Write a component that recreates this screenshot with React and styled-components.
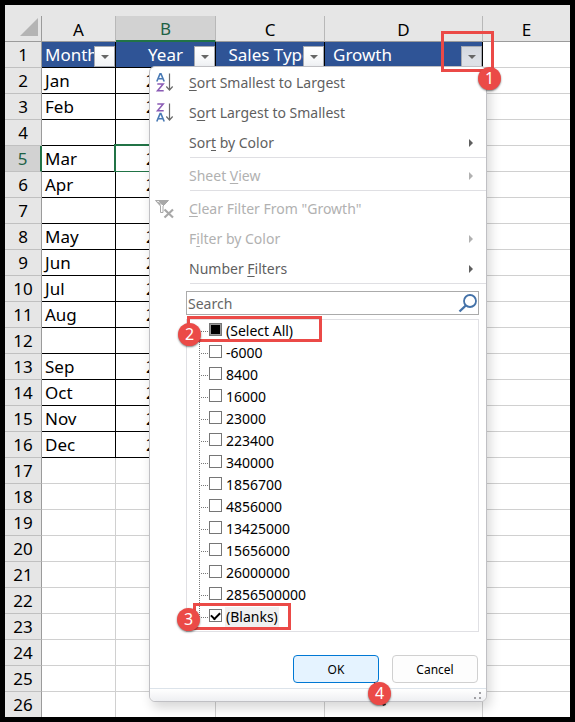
import React, { Fragment, useState, useEffect, useRef } from "react";
import styled, { createGlobalStyle } from "styled-components";

const GlobalStyle = createGlobalStyle`
  * {
    box-sizing: border-box;
  }
  body {
    margin: 0;
    background: #000;
    font-family: "Noto Sans", "Open Sans", sans-serif;
  }
`;

const Frame = styled.main`
  padding: 5px;
  background: #000;
`;

const Sheet = styled.div`
  position: relative;
  padding-top: 11px;
  background: #e6e6e6;
`;

const Grid = styled.table`
  width: 100%;
  table-layout: fixed;
  border-collapse: separate;
  border-spacing: 0;
  font-size: 17px;
  line-height: 24px;
  color: #000;
`;

const Col = styled.col`
  width: ${(props) => props.size};
`;

const Corner = styled.td`
  height: 26px;
  padding: 0 3px 3px 0;
  border-right: 1px solid #9b9b9b;
  border-bottom: 1px solid #9b9b9b;
`;

const CornerMark = styled.div`
  width: 0;
  height: 0;
  margin-left: auto;
  border-left: 18px solid transparent;
  border-bottom: 18px solid #b4b4b4;
`;

const ColumnHead = styled.th`
  height: 26px;
  padding: ${(props) => (props.$active ? "1px 0 0" : "2px 0 0")};
  line-height: 23px;
  font-weight: 400;
  color: ${(props) => (props.$active ? "#1e6145" : "#000")};
  background: ${(props) => (props.$active ? "#d2d2d2" : "#e6e6e6")};
  border-right: ${(props) => (props.$last ? "0" : "1px solid #b8b8b8")};
  border-bottom: ${(props) =>
    props.$active ? "2px solid #217346" : "1px solid #9b9b9b"};
`;

const RowHead = styled.th`
  height: 26px;
  padding: 0;
  font-weight: 400;
  color: ${(props) => (props.$active ? "#1e6145" : "#000")};
  background: ${(props) => (props.$active ? "#d2d2d2" : "#e6e6e6")};
  border-right: ${(props) =>
    props.$active ? "2px solid #217346" : "1px solid #9b9b9b"};
  border-bottom: 1px solid #c0c0c0;
  tr:last-child > & {
    height: 25px;
    border-bottom: 0;
  }
`;

const Cell = styled.td`
  position: relative;
  height: 26px;
  padding: 0 3px;
  background: #fff;
  text-align: ${(props) => props.$align || "left"};
  border-right: ${(props) => (props.$last ? "0" : "1px solid")};
  border-bottom: 1px solid;
  border-color: ${(props) => (props.$filled ? "#000" : "#d0d0d0")};
  tr:last-child > & {
    height: 25px;
    border-bottom: 0;
  }
  &::after {
    content: "";
    display: ${(props) => (props.$selected ? "block" : "none")};
    position: absolute;
    inset: -2px;
    border: 2px solid #217346;
  }
`;

const TitleCell = styled(Cell)`
  padding: 0 ${(props) => (props.$indent ? "8px" : "3px")};
  color: #fff;
  background: #2f5496;
  white-space: nowrap;
`;

const FilterButton = styled.button`
  position: absolute;
  right: 0;
  bottom: 0;
  display: flex;
  align-items: center;
  justify-content: center;
  width: 21px;
  height: 21px;
  padding: 0;
  border: 1px solid #a6aab2;
  background: ${(props) =>
    props.$open
      ? "linear-gradient(#d4d8df, #e2e5ea)"
      : "linear-gradient(#fff, #f1f3f6)"};
`;

const DownArrow = styled.span`
  border: 4px solid transparent;
  border-top-color: #666;
  border-bottom: 0;
`;

const Menu = styled.form`
  position: absolute;
  top: 61px;
  left: 144px;
  width: 338px;
  border: 1px solid #c0c0c4;
  border-radius: 6px;
  background: #fff;
  box-shadow: 3px 6px 12px rgba(0, 0, 0, 0.16);
  font-size: 14px;
`;

const Item = styled.button`
  display: flex;
  align-items: center;
  width: 100%;
  height: 30px;
  padding: 2px 13px 0 4px;
  border: 0;
  background: none;
  font-family: inherit;
  font-size: 14px;
  line-height: 20px;
  text-align: left;
  color: ${(props) => (props.disabled ? "#b1b1b1" : "#5f5f5f")};
`;

const ItemIcon = styled.span`
  display: flex;
  width: 35px;
`;

const ItemLabel = styled.span`
  flex: 1;
  white-space: nowrap;
  u {
    text-underline-offset: 2px;
  }
`;

const SubArrow = styled.span`
  border: 4px solid transparent;
  border-left-color: currentColor;
  border-right: 0;
`;

const Separator = styled.hr`
  height: 1px;
  margin: 0 0 2px 40px;
  border: 0;
  background: #dfdfe3;
`;

const Picker = styled.div`
  padding: 5px 7px 0 36px;
`;

const SearchBox = styled.label`
  display: flex;
  align-items: center;
  height: 24px;
  border: 1px solid #ababab;
`;

const SearchInput = styled.input`
  flex: 1;
  min-width: 0;
  padding: 0 1px;
  border: 0;
  outline: 0;
  background: none;
  font-family: inherit;
  font-size: 14px;
  color: #5f5f5f;
  &::placeholder {
    color: #666;
    opacity: 1;
  }
`;

const Tree = styled.ul`
  margin: 4px 0 0;
  padding: 0 0 3px 12px;
  border: 1px solid #e0e0e4;
  list-style: none;
`;

const Branch = styled.li`
  position: relative;
  display: flex;
  align-items: center;
  height: 22px;
  &::before {
    content: "";
    align-self: ${(props) => (props.$first ? "flex-end" : "flex-start")};
    width: 1px;
    height: ${(props) => (props.$first || props.$last ? "11px" : "22px")};
    background: repeating-linear-gradient(#777 0 1px, transparent 1px 2px);
  }
`;

const Twig = styled.span`
  width: 8px;
  height: 1px;
  margin-right: 1px;
  background: repeating-linear-gradient(
    90deg,
    transparent 0 1px,
    #777 1px 2px
  );
`;

const Option = styled.label`
  display: flex;
  align-items: center;
  line-height: 20px;
  color: #000;
`;

const Check = styled.input`
  appearance: none;
  display: flex;
  align-items: center;
  justify-content: center;
  width: 13px;
  height: 13px;
  margin: 0 3px 3px 0;
  border: 1px solid #767676;
  background: #fff;
  &:indeterminate::after {
    content: "";
    width: 9px;
    height: 9px;
    border: 1px solid #999;
    background: #000;
  }
  &:checked::after {
    content: "";
    width: 7px;
    height: 4px;
    margin-bottom: 2px;
    border-left: 2px solid #000;
    border-bottom: 2px solid #000;
    transform: rotate(-45deg);
  }
`;

const OptionText = styled.span`
  padding: 0 1px;
  background: ${(props) => (props.$current ? "#f0f0f0" : "none")};
`;

const Actions = styled.div`
  display: flex;
  justify-content: flex-end;
  gap: 13px;
  padding: 23px 1px 5px;
`;

const ActionButton = styled.button`
  width: 86px;
  height: 28px;
  padding: 0;
  border: 1px solid ${(props) => (props.$primary ? "#0078d4" : "#d0d0d0")};
  border-radius: 4px;
  background: ${(props) => (props.$primary ? "#e5f3ff" : "#fdfdfd")};
  font-family: inherit;
  font-size: 12px;
  color: #000;
`;

const Anchor = styled.span`
  position: relative;
  display: flex;
`;

const MenuFoot = styled.div`
  display: flex;
  justify-content: flex-end;
  height: 13px;
  padding: 3px 4px 0;
  border-top: 1px solid #dce3ea;
  border-radius: 0 0 6px 6px;
  background: linear-gradient(#fff, #eeeff2);
`;

const Highlight = styled.span`
  position: absolute;
  z-index: 1;
  top: ${(props) => props.$top};
  left: ${(props) => props.$left};
  width: ${(props) => props.$width};
  height: ${(props) => props.$height};
  border: 3px solid #eb4a47;
  pointer-events: none;
`;

const Step = styled.span`
  position: absolute;
  z-index: 2;
  top: ${(props) => props.$top};
  left: ${(props) => props.$left};
  width: 23px;
  height: 23px;
  border-radius: 50%;
  background: #eb4a47;
  box-shadow: 0 1px 2px rgba(0, 0, 0, 0.5);
  font-size: 16px;
  line-height: 23px;
  text-align: center;
  color: #fff;
  pointer-events: none;
`;

const Pointer = styled.svg`
  position: absolute;
  z-index: 1;
  top: 27px;
  left: 81px;
`;

const months = {
  2: "Jan",
  3: "Feb",
  5: "Mar",
  6: "Apr",
  8: "May",
  9: "Jun",
  10: "Jul",
  11: "Aug",
  13: "Sep",
  14: "Oct",
  15: "Nov",
  16: "Dec",
};

const rows = Array.from({ length: 25 }, (_, i) => i + 2);

const values = [
  "-6000",
  "8400",
  "16000",
  "23000",
  "223400",
  "340000",
  "1856700",
  "4856000",
  "13425000",
  "15656000",
  "26000000",
  "2856500000",
  "(Blanks)",
];

const SortIcon = ({ descending }) => (
  <svg width="22" height="20" viewBox="0 0 22 20" fill="none">
    <g transform={descending ? "translate(0 10)" : undefined}>
      <path d="M2.8 8.500 6.100.6h.8L10.200 8.500M4 5.800h5" stroke="#4a7ab5" strokeWidth="1.600" />
    </g>
    <g transform={descending ? "translate(0 -10)" : undefined}>
      <path d="M3.300 11h5.900L3.500 17.700h6.200" stroke="#8a5bb5" strokeWidth="1.500" />
    </g>
    <path d="M15.500.5v16.500M12.300 13.500l3.200 3.500 3.200-3.500" stroke="#6a6a6a" strokeWidth="1.200" />
  </svg>
);

const ClearFilterIcon = () => (
  <svg width="22" height="20" viewBox="0 0 22 20" fill="none">
    <path d="M1.500 1.500h13L9 7v6.500H6.500V7z" stroke="#a8a8a8" />
    <path d="M1.500 1.500h13L10.500 6H8L4 1.500z" fill="#a8a8a8" />
    <path d="M2 2l4.500 5V4z" fill="#a8a8a8" />
    <path d="M10.500 10.500l8.500 8M19 10.500l-8.500 8" stroke="#a8a8a8" strokeWidth="2.200" />
  </svg>
);

const SearchIcon = () => (
  <svg width="20" height="20" viewBox="0 0 20 20" fill="none" stroke="#4472a8">
    <circle cx="12" cy="8" r="6" strokeWidth="1.8" />
    <path d="M7.800 12.500L1.500 18.500" strokeWidth="2.400" />
  </svg>
);

const GripIcon = () => (
  <svg width="8" height="8" viewBox="0 0 8 8" fill="#a0a0a4">
    <path d="M5 0h2v2H5zM0 5h2v2H0zM5 5h2v2H5z" />
  </svg>
);

const App = () => {
  const [checked, setChecked] = useState(["(Blanks)"]);
  const [query, setQuery] = useState("");
  const selectAll = useRef(null);

  const all = checked.length === values.length;

  useEffect(() => {
    selectAll.current.indeterminate = checked.length > 0 && !all;
  }, [checked, all]);

  const toggle = (value) =>
    setChecked(
      checked.includes(value)
        ? checked.filter((v) => v !== value)
        : [...checked, value]
    );

  return (
    <Fragment>
      <GlobalStyle />
      <Frame>
        <Sheet>
          <Grid>
            <colgroup>
              <Col size="37px" />
              <Col size="74px" />
              <Col size="100px" />
              <Col size="109px" />
              <Col size="158px" />
              <Col size="auto" />
            </colgroup>
            <thead>
              <tr>
                <Corner>
                  <CornerMark />
                </Corner>
                {["A", "B", "C", "D", "E"].map((name) => (
                  <ColumnHead
                    key={name}
                    scope="col"
                    $active={name === "B"}
                    $last={name === "E"}
                  >
                    {name}
                  </ColumnHead>
                ))}
              </tr>
            </thead>
            <tbody>
              <tr>
                <RowHead scope="row">1</RowHead>
                <TitleCell $filled>
                  Month
                  <FilterButton type="button" aria-label="Filter Month">
                    <DownArrow />
                  </FilterButton>
                </TitleCell>
                <TitleCell $filled $align="center">
                  Year
                  <FilterButton type="button" aria-label="Filter Year">
                    <DownArrow />
                  </FilterButton>
                </TitleCell>
                <TitleCell $filled $align="center">
                  Sales Type
                  <FilterButton type="button" aria-label="Filter Sales Type">
                    <DownArrow />
                  </FilterButton>
                </TitleCell>
                <TitleCell $filled $indent>
                  Growth
                  <FilterButton type="button" aria-label="Filter Growth" $open>
                    <DownArrow />
                  </FilterButton>
                  <Highlight $top="-11px" $left="116px" $width="53px" $height="41px" />
                  <Step $top="25px" $left="153px">1</Step>
                </TitleCell>
                <Cell $last />
              </tr>
              {rows.map((row) => (
                <tr key={row}>
                  <RowHead scope="row" $active={row === 5}>
                    {row}
                  </RowHead>
                  <Cell $filled={row <= 16}>{months[row]}</Cell>
                  <Cell $filled={row <= 16} $align="center" $selected={row === 5}>
                    {months[row] && "2021"}
                  </Cell>
                  <Cell />
                  <Cell />
                  <Cell $last />
                </tr>
              ))}
            </tbody>
          </Grid>

          <Menu onSubmit={(e) => e.preventDefault()}>
            <Item type="button">
              <ItemIcon>
                <SortIcon />
              </ItemIcon>
              <ItemLabel>
                <u>S</u>ort Smallest to Largest
              </ItemLabel>
            </Item>
            <Item type="button">
              <ItemIcon>
                <SortIcon descending />
              </ItemIcon>
              <ItemLabel>
                S<u>o</u>rt Largest to Smallest
              </ItemLabel>
            </Item>
            <Item type="button">
              <ItemIcon />
              <ItemLabel>
                Sor<u>t</u> by Color
              </ItemLabel>
              <SubArrow />
            </Item>
            <Separator />
            <Item type="button" disabled>
              <ItemIcon />
              <ItemLabel>
                Sheet <u>V</u>iew
              </ItemLabel>
              <SubArrow />
            </Item>
            <Separator />
            <Item type="button" disabled>
              <ItemIcon>
                <ClearFilterIcon />
              </ItemIcon>
              <ItemLabel>
                <u>C</u>lear Filter From "Growth"
              </ItemLabel>
            </Item>
            <Item type="button" disabled>
              <ItemIcon />
              <ItemLabel>
                F<u>i</u>lter by Color
              </ItemLabel>
              <SubArrow />
            </Item>
            <Item type="button">
              <ItemIcon />
              <ItemLabel>
                Number <u>F</u>ilters
              </ItemLabel>
              <SubArrow />
            </Item>
            <Separator />

            <Picker>
              <SearchBox>
                <SearchInput
                  type="text"
                  placeholder="Search"
                  aria-label="Search"
                  value={query}
                  onChange={(e) => setQuery(e.target.value)}
                />
                <SearchIcon />
              </SearchBox>
              <Tree>
                <Branch $first>
                  <Twig />
                  <Option>
                    <Check
                      type="checkbox"
                      ref={selectAll}
                      checked={all}
                      onChange={() => setChecked(all ? [] : values)}
                    />
                    <OptionText>(Select All)</OptionText>
                  </Option>
                  <Highlight $top="-4px" $left="-12px" $width="135px" $height="26px" />
                  <Step $top="3px" $left="-21px">2</Step>
                </Branch>
                {values
                  .filter((value) => value.includes(query))
                  .map((value) => {
                    const blanks = value === "(Blanks)";
                    return (
                      <Branch key={value} $last={blanks}>
                        <Twig />
                        <Option>
                          <Check
                            type="checkbox"
                            checked={checked.includes(value)}
                            onChange={() => toggle(value)}
                          />
                          <OptionText $current={blanks}>{value}</OptionText>
                        </Option>
                        {blanks && (
                          <Fragment>
                            <Highlight $top="-3px" $left="-6px" $width="98px" $height="27px" />
                            <Step $top="2px" $left="-22px">3</Step>
                          </Fragment>
                        )}
                      </Branch>
                    );
                  })}
              </Tree>
              <Actions>
                <Anchor>
                  <ActionButton type="submit" $primary>
                    OK
                  </ActionButton>
                  <Pointer width="16" height="25" viewBox="0 0 16 25">
                    <path d="M0 0v18l4-4 5 10 3-1-4-10h6z" fill="#222" />
                  </Pointer>
                  <Step $top="27px" $left="75px">4</Step>
                </Anchor>
                <ActionButton type="button">Cancel</ActionButton>
              </Actions>
            </Picker>
            <MenuFoot>
              <GripIcon />
            </MenuFoot>
          </Menu>
        </Sheet>
      </Frame>
    </Fragment>
  );
};

export default App;
